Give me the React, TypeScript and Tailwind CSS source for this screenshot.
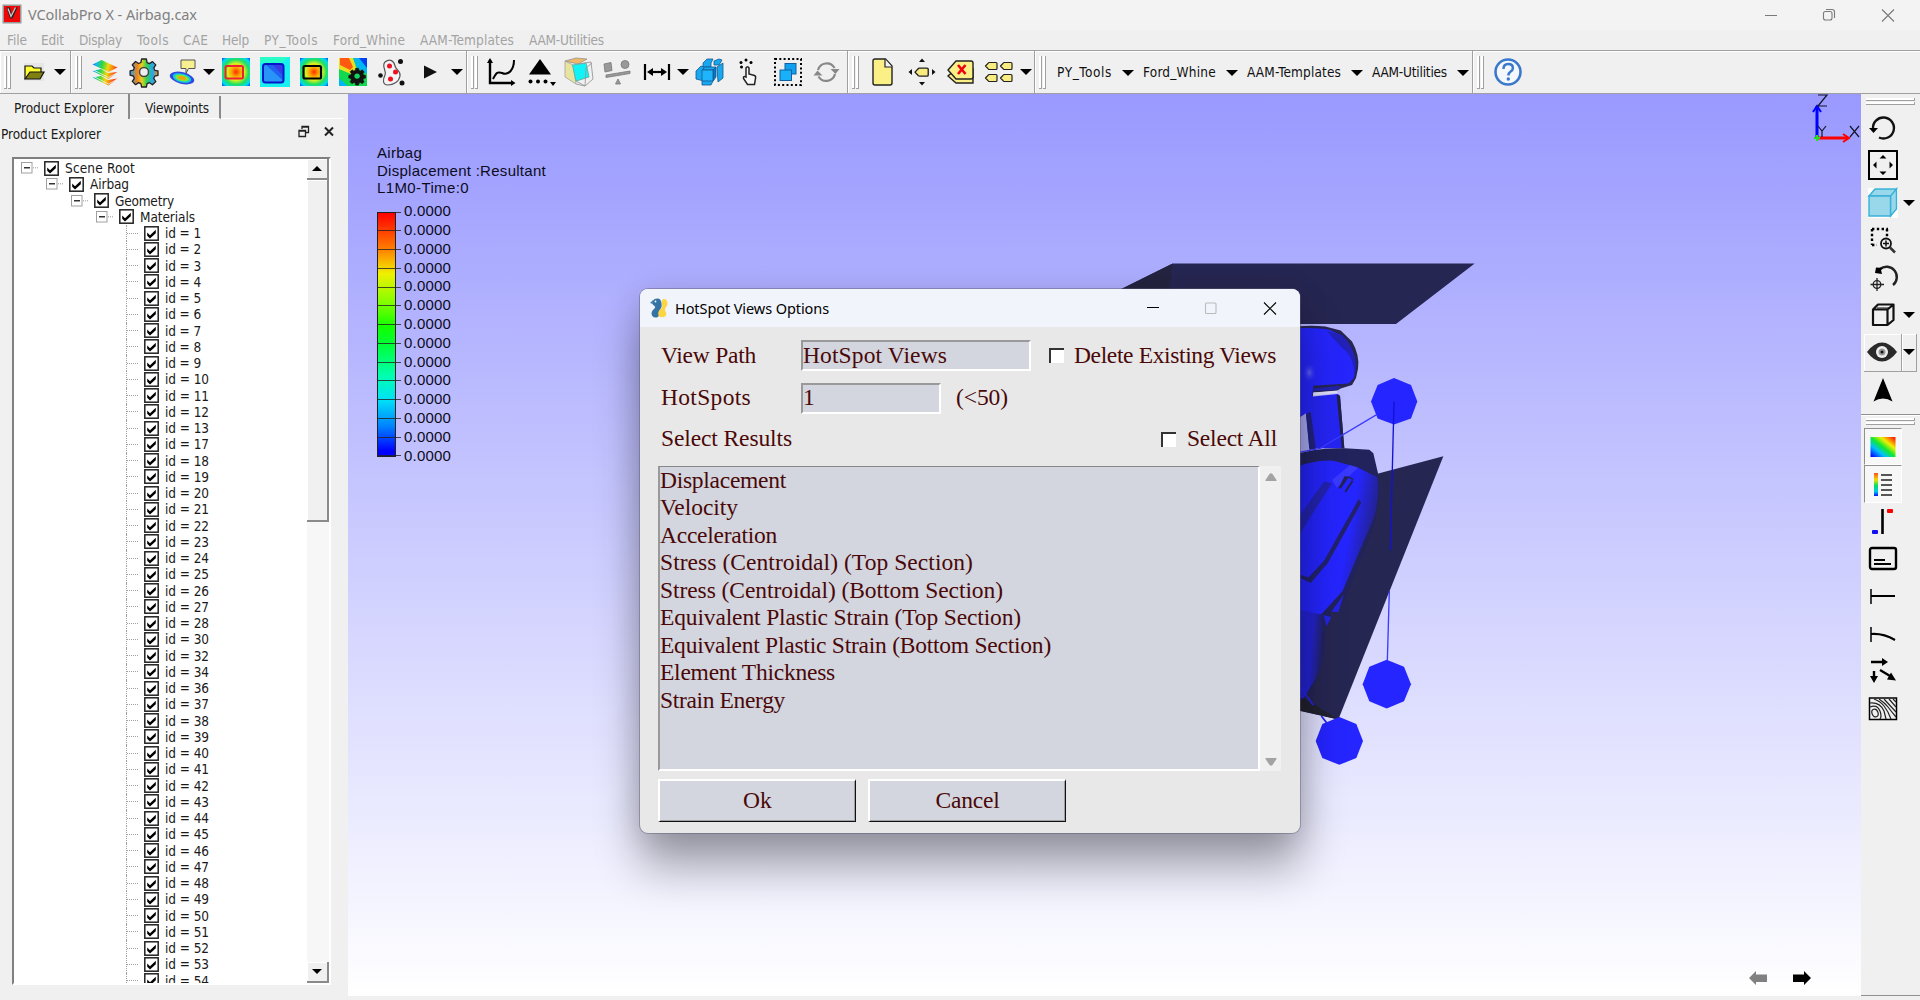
import { useLayoutEffect, useRef, type ReactNode } from "react";

const UI = "font-['DejaVu_Sans_Condensed','DejaVu_Sans','Noto_Sans',sans-serif]";

/* Text whose tracking is adjusted so that it fills a given width. */
function Fit({ w, className = "", children }: { w: number; className?: string; children: string }) {
  const ref = useRef<HTMLSpanElement>(null);
  useLayoutEffect(() => {
    const el = ref.current;
    if (!el) return;
    el.style.letterSpacing = "0px";
    const natural = el.getBoundingClientRect().width;
    el.style.letterSpacing = `${(w - natural) / children.length}px`;
  }, [w, children]);
  return (
    <span ref={ref} className={`inline-block shrink-0 whitespace-pre ${className}`}>
      {children}
    </span>
  );
}

function Ic({ children, className = "" }: { children: ReactNode; className?: string }) {
  return (
    <svg viewBox="0 0 32 32" className={`h-8 w-8 shrink-0 ${className}`} fill="none">
      {children}
    </svg>
  );
}

function Btn({ children }: { children: ReactNode }) {
  return <div className="flex h-full w-[39px] shrink-0 items-center justify-center">{children}</div>;
}

function Arrow() {
  return (
    <div className="flex h-full w-[14px] shrink-0 items-center justify-center">
      <svg viewBox="0 0 12 6" className="h-[6px] w-[12px]">
        <path d="M0 0H12L6 6Z" fill="#000" />
      </svg>
    </div>
  );
}

function Grip() {
  return (
    <div className="flex h-[33px] w-[8px] shrink-0 gap-[1px]">
      <div className="w-[3px] border-r border-b border-[#a0a0a0] bg-white" />
      <div className="w-[3px] border-r border-b border-[#a0a0a0] bg-white" />
    </div>
  );
}

function HGrip() {
  return (
    <div className="flex h-[7px] w-[49px] shrink-0 flex-col gap-[1px]">
      <div className="h-[3px] border-r border-b border-[#a0a0a0] bg-white" />
      <div className="h-[3px] border-r border-b border-[#a0a0a0] bg-white" />
    </div>
  );
}

function Bar({ width, children }: { width: string; children: ReactNode }) {
  return (
    <div className={`flex h-full shrink-0 items-center border-r border-[#a0a0a0] pl-[4px] shadow-[inset_1px_1px_0_#fff] ${width}`}>
      <Grip />
      {children}
    </div>
  );
}

const gearPath =
  "M13.6 3h4.8l.7 3.6 2.3 1 3.1-2 3.3 3.3-2 3 1 2.400 3.2.6v4.400l-3.300.8-1 2.300 2.100 3.100-3.300 3.300-3.100-2.100-2.300 1-.7 3.300h-4.800l-.7-3.400-2.300-1-3 2.100-3.300-3.300 2-3.100-1-2.300-3.200-.8v-4.400l3.300-.7 1-2.300-2.100-3 3.300-3.300 3 2 2.300-1z";

const menus: [string, number][] = [
  ["File", 34],
  ["Edit", 38],
  ["Display", 58],
  ["Tools", 46],
  ["CAE", 39],
  ["Help", 42],
  ["PY_Tools", 69],
  ["Ford_Whine", 87],
  ["AAM-Templates", 109],
  ["AAM-Utilities", 90],
];
const menuText = [20, 23, 43, 32, 25, 27, 54, 72, 94, 75];

function TitleBar() {
  return (
    <header className="flex h-[30px] items-center bg-[#f3f3f3] text-[#808080]">
      <svg viewBox="0 0 20 20" className="ml-[2px] mt-[-2px] h-5 w-5">
        <rect x=".5" y=".5" width="19" height="19" fill="#999" />
        <rect x="2" y="2" width="16" height="16" fill="#f00808" />
        <path d="M4.500 3.500h3.500l1.500 7 3.500-7h2.500l-5 11h-2.500z" fill="#222" />
        <path d="M6 4.500l3 8 4.500-9" stroke="#ccc" strokeWidth="1.300" fill="none" />
      </svg>
      <Fit w={169} className="ml-[6px] mt-[-1px] font-['Noto_Sans',sans-serif] text-[14.500px]">VCollabPro X - Airbag.cax</Fit>
      <div className="flex-1" />
      <svg viewBox="0 0 160 20" className="mr-[14px] mt-[-1px] h-5 w-40" fill="none" stroke="#7a7a7a" strokeWidth="1.100">
        <path d="M19 10.500h12M136 4.500l12 12M148 4.500l-12 12" />
        <rect x="77.500" y="6.500" width="8.500" height="8.500" rx="2" />
        <path d="M80 4.500h6a2.500 2.500 0 0 1 2.500 2.500v6" />
      </svg>
    </header>
  );
}

function MenuBar() {
  return (
    <nav className={`flex h-[20px] items-center bg-[#f0f0f0] pt-[1px] pl-[7px] text-[13.500px] text-[#a3a3a3] ${UI}`}>
      {menus.map(([m, w], i) => (
        <div key={m} className="shrink-0" style={{ width: w }}>
          <Fit w={menuText[i]}>{m}</Fit>
        </div>
      ))}
    </nav>
  );
}

function Tag({ x, y, s = 1 }: { x: number; y: number; s?: number }) {
  return (
    <path transform={`translate(${x} ${y}) scale(${s})`} d="M0 4L3 .8Q3.400 .5 4 .5H10.500Q11.500 .5 11.500 1.500V6.500Q11.500 7.500 10.500 7.500H4Q3.400 7.500 3 7.200Z" fill="#f8ec80" stroke="#222" strokeWidth="1.200" strokeLinejoin="round" />
  );
}

function ToolBars() {
  return (
    <div className="flex h-[44px] border-t-[1.500px] border-b border-[#a0a0a0] bg-[#f0f0f0]">
      <svg className="absolute h-0 w-0">
        <defs>
          <radialGradient id="hot" cx=".5" cy=".5" r=".72">
            <stop offset="0" stopColor="#ff2a00" />
            <stop offset=".22" stopColor="#ffa000" />
            <stop offset=".42" stopColor="#d8f020" />
            <stop offset=".62" stopColor="#20e060" />
            <stop offset=".82" stopColor="#00d8f0" />
            <stop offset="1" stopColor="#0030f0" />
          </radialGradient>
          <linearGradient id="rain" x1="0" y1="1" x2="1" y2="0">
            <stop offset=".05" stopColor="#0010ff" />
            <stop offset=".3" stopColor="#00c0ff" />
            <stop offset=".5" stopColor="#10e830" />
            <stop offset=".7" stopColor="#f0f000" />
            <stop offset=".95" stopColor="#ff2000" />
          </linearGradient>
          <linearGradient id="sheet" gradientUnits="userSpaceOnUse" x1="3" y1="0" x2="29" y2="6">
            <stop offset="0" stopColor="#2030ff" />
            <stop offset=".22" stopColor="#10b8f0" />
            <stop offset=".45" stopColor="#30d840" />
            <stop offset=".68" stopColor="#f0d810" />
            <stop offset="1" stopColor="#ff4010" />
          </linearGradient>
          <linearGradient id="rainh" x1="0" y1="0" x2="1" y2="0">
            <stop offset="0" stopColor="#20a8f0" />
            <stop offset=".25" stopColor="#f08020" />
            <stop offset=".42" stopColor="#e8d020" />
            <stop offset=".6" stopColor="#30d050" />
            <stop offset=".8" stopColor="#20a8f0" />
            <stop offset="1" stopColor="#f09020" />
          </linearGradient>
          <linearGradient id="rainv" x1="0" y1="0" x2="0" y2="1">
            <stop offset="0" stopColor="#ff5020" />
            <stop offset=".3" stopColor="#f0e000" />
            <stop offset=".55" stopColor="#00e060" />
            <stop offset=".8" stopColor="#00c8f0" />
            <stop offset="1" stopColor="#0010ff" />
          </linearGradient>
        </defs>
      </svg>
      <Bar width="w-[71px]">
        <div className="w-[2px]" />
        <Btn>
          <Ic>
            <path d="M6 7h20v18H6z" fill="#e6e6e6" />
            <path d="M7 23V10h7l2 2h7v4" fill="#ffff30" stroke="#111" strokeWidth="1.200" />
            <path d="M7 23l5-7h14l-4 7z" fill="#808010" stroke="#111" strokeWidth="1.200" />
          </Ic>
        </Btn>
        <Arrow />
      </Bar>
      <Bar width="w-[396px]">
        <div className="w-[2px]" />
        <Btn>
          <Ic>
            <path d="M3.500 21.500L12 20l7 4 9.500-1.500-9 7z" fill="url(#sheet)" />
            <path d="M3.500 15L12 13l7 4 9.500-1-9 7z" fill="url(#sheet)" />
            <path d="M3.500 8.500L12.500 4 28.500 11.500 19.500 16z" fill="url(#sheet)" />
            <path d="M3.500 13.500l16 8 9-5M3.500 20l16 8 9-5" stroke="#f0f0f0" strokeWidth=".8" />
          </Ic>
        </Btn>
        <Btn>
          <Ic>
            <path d={gearPath} fill="url(#rainh)" stroke="#222" strokeWidth="1.300" strokeLinejoin="round" />
            <circle cx="16" cy="16" r="4.500" fill="#eee" stroke="#444" strokeWidth="1.500" />
          </Ic>
        </Btn>
        <Btn>
          <Ic>
            <path d="M14 4h14v8.500h-6.500l-2.500 5v-5h-5z" fill="#f8f090" stroke="#555" />
            <g transform="rotate(14 15 22)">
              <ellipse cx="15" cy="22" rx="12.500" ry="5.800" fill="#3048e0" />
              <ellipse cx="15" cy="22" rx="9.500" ry="4.400" fill="#10c8e0" />
              <ellipse cx="15" cy="22" rx="7" ry="3.100" fill="#80e830" />
              <ellipse cx="15" cy="22" rx="4" ry="1.800" fill="#f0a010" />
            </g>
          </Ic>
        </Btn>
        <Arrow />
        <Btn>
          <Ic>
            <rect x="2" y="2" width="28" height="28" fill="url(#hot)" />
            <rect x="5.500" y="10" width="17.500" height="12.500" rx="1.500" stroke="#f02030" strokeWidth="2" />
          </Ic>
        </Btn>
        <Btn>
          <Ic>
            <rect x="1" y="1" width="30" height="30" fill="#18f0f0" />
            <path d="M1 1h29L22 7H1z" fill="#28ffc8" />
            <rect x="4" y="8" width="20.500" height="18.500" rx="2.500" fill="#2894f8" />
            <path d="M6 8h17q1.500 0 1.500 2v15z" fill="#2060f0" />
            <path d="M14 9h9.500v10z" fill="#3838e8" />
            <rect x="4" y="8" width="20.500" height="18.500" rx="2.500" stroke="#0018c8" strokeWidth="2" />
          </Ic>
        </Btn>
        <Btn>
          <Ic>
            <rect x="2" y="2" width="28" height="28" fill="url(#hot)" />
            <rect x="5.500" y="10" width="17.500" height="12.500" rx="1.500" stroke="#000" strokeWidth="2.200" />
          </Ic>
        </Btn>
        <Btn>
          <Ic>
            <rect x="2" y="2" width="28" height="28" fill="#10d850" />
            <path d="M16 2h14v16L20 12z" fill="#00b8f0" />
            <path d="M22 2h8v10z" fill="#0040f0" />
            <path d="M2 2h14l4 12-6 4-12-5z" fill="#e8e020" />
            <path d="M3 2h9l4 9-3 3L3 9z" fill="#ff5810" />
            <path d="M2 22l9 8H2z" fill="#00b8f0" />
            <g transform="translate(10.500 10.500) scale(.6)">
              <path d={gearPath} fill="#111" stroke="#111" />
              <circle cx="16" cy="16" r="4.500" fill="#10d860" />
            </g>
          </Ic>
        </Btn>
        <Btn>
          <Ic className="-ml-[2px]">
            <path d="M10 6c5-4 9-1 10 4 1 4 6 5 5 10-1 6-7 9-12 9-6 0-5-6-3-10s-4-9 0-13z" fill="#f4f4f4" stroke="#555" strokeWidth="1.200" />
            <g fill="#f01020">
              <circle cx="14.500" cy="10" r="2.500" />
              <circle cx="20.500" cy="16" r="2.500" />
              <circle cx="15.500" cy="23" r="2.500" />
            </g>
            <g fill="#111">
              <circle cx="25.500" cy="5.500" r="2.500" />
              <circle cx="5.500" cy="19.500" r="2.300" />
              <circle cx="27" cy="27" r="2.500" />
            </g>
          </Ic>
        </Btn>
        <Btn>
          <Ic>
            <path d="M9 9.500v13L22 16z" fill="#111" />
          </Ic>
        </Btn>
        <Arrow />
      </Bar>
      <Bar width="w-[381px]">
        <div className="w-[2px]" />
        <Btn>
          <Ic>
            <path d="M5 4v23h23" stroke="#000" strokeWidth="2.400" />
            <path d="M2 7l3-5 3 5zM26 24l4.500 3-4.500 3z" fill="#000" />
            <path d="M8 23c4-8 5-7 9-6 7 3 12-4 12-13" stroke="#000" strokeWidth="2" />
          </Ic>
        </Btn>
        <Btn>
          <Ic>
            <path d="M16 3L27 18.500H5z" fill="#000" />
            <g fill="#000">
              <circle cx="6.500" cy="25.500" r="2" />
              <circle cx="14" cy="25.500" r="2" />
              <circle cx="21.500" cy="25.500" r="2" />
              <path d="M26 26h6l-3 4z" />
            </g>
          </Ic>
        </Btn>
        <Btn>
          <Ic>
            <path d="M2 5l11-3 11 1-9 5z" fill="#f0b868" stroke="#888" strokeWidth=".7" />
            <path d="M2 5l8 4 3 19-11-7z" fill="#e8e4a0" stroke="#999" strokeWidth=".7" />
            <path d="M9.500 9L23 7l3 14-13 4z" fill="#10f4f8" stroke="#58b8a8" />
            <path d="M15 8l13-2 2 17-8 7-9-2M22 30l1-18M23 12l6-5M13 25l9 5" stroke="#999" strokeWidth=".9" />
          </Ic>
        </Btn>
        <Btn>
          <Ic>
            <g fill="#999" stroke="#777" strokeWidth=".8">
              <path d="M2 8l7-1.500 1 8-7 1.500z" />
              <circle cx="23" cy="8.500" r="4" />
              <path d="M4 19l24-4v2.500L4 21.500z" />
              <path d="M16 23l2.500 5h-5z" />
            </g>
          </Ic>
        </Btn>
        <Btn>
          <Ic>
            <path d="M4 8v16M28 8v16" stroke="#000" strokeWidth="2.200" />
            <path d="M8 16h16" stroke="#000" strokeWidth="2.200" />
            <path d="M6 16l6-4v8zM26 16l-6-4v8z" fill="#000" />
          </Ic>
        </Btn>
        <Arrow />
        <Btn>
          <Ic>
            <g fill="#18a8f0" stroke="#105890" strokeWidth=".8" strokeLinejoin="round">
              <path d="M9 7l4-4h6l-2 4v4H9zM20 5l5-2 3 1-3 5h-5z" />
              <path d="M2 15l5-5 3 1v14l-8-2zM23 11l6-4v15l-5 4z" />
              <path d="M8 25l3-2h9l-3 6H8z" />
              <path d="M8 14l3-3h11l-3 3z" />
              <path d="M19 14l3-3v10l-3 4z" fill="#0878c0" />
              <path d="M8 14h11v11H8z" fill="#20b4fc" />
            </g>
          </Ic>
        </Btn>
        <Btn>
          <Ic>
            <g fill="#000">
              <circle cx="13" cy="4" r="1.500" />
              <circle cx="8" cy="6.500" r="1.500" />
              <circle cx="18" cy="6.500" r="1.500" />
              <circle cx="8.500" cy="11" r="1.500" />
            </g>
            <path d="M13 21v-9q1.500-2.500 3 0v6l5.500 1.500q1.500.5 1 3l-1 6h-7l-4-6q-.5-3 2.500-1.500z" fill="#f8f8f8" stroke="#222" strokeWidth="1.500" />
          </Ic>
        </Btn>
        <Btn>
          <Ic>
            <rect x="3" y="3" width="26" height="26" stroke="#000" strokeWidth="2" strokeDasharray="2 2.300" />
            <rect x="13" y="7.500" width="11" height="10.500" fill="#10a0f0" stroke="#1060a0" />
            <rect x="8" y="14" width="11.500" height="10.500" fill="#18b0f8" stroke="#1060a0" />
          </Ic>
        </Btn>
        <Btn>
          <Ic>
            <path d="M7 14a9 9 0 0 1 16.500-2M24 18a9 9 0 0 1-16.500 2.500" stroke="#888" strokeWidth="2.200" />
            <path d="M19.500 13h9l-4 5zM2.500 19.500h9l-5-5z" fill="#888" />
          </Ic>
        </Btn>
      </Bar>
      <Bar width="w-[187px]">
        <div className="w-[3px]" />
        <Btn>
          <Ic>
            <path d="M6 5q0-2 2-2h10.500l6.500 7v17q0 2-2 2H8q-2 0-2-2z" fill="#faf086" stroke="#222" strokeWidth="1.400" />
            <path d="M18 3v8h7" fill="#f4f4f4" stroke="#222" strokeWidth="1.200" />
          </Ic>
        </Btn>
        <Btn>
          <Ic>
            <Tag x={9} y={11.500} s={1.150} />
            <path d="M13 6l3-3.500L19 6zM13 26l3 3.500 3-3.500zM6 13l-3.500 3L6 19zM26 13l3.500 3-3.500 3z" fill="#111" />
          </Ic>
        </Btn>
        <Btn>
          <Ic>
            <path d="M3 20l8 7h17V13H11z" fill="#faf086" stroke="#222" strokeWidth="1.400" />
            <path d="M3 14L11 5h15q2 0 2 2v14q0 2-2 2H11z" fill="#faf086" stroke="#222" strokeWidth="1.400" strokeLinejoin="round" />
            <path d="M13 9l7.500 9M20.500 9L13 18" stroke="#f00010" strokeWidth="2.600" />
          </Ic>
        </Btn>
        <Btn>
          <Ic>
            <Tag x={1.500} y={6} />
            <Tag x={16.500} y={6} />
            <Tag x={1.500} y={18} />
            <Tag x={16.500} y={18} />
          </Ic>
        </Btn>
        <Arrow />
      </Bar>
      <Bar width="w-[438px]">
        <div className={`flex items-center pt-[1px] pl-[10px] text-[13.500px] text-[#111] ${UI}`}>
          <Fit w={55}>PY_Tools</Fit>
          <div className="w-[9px]" />
          <Arrow />
          <div className="w-[8px]" />
          <Fit w={73}>Ford_Whine</Fit>
          <div className="w-[9px]" />
          <Arrow />
          <div className="w-[8px]" />
          <Fit w={94}>AAM-Templates</Fit>
          <div className="w-[9px]" />
          <Arrow />
          <div className="w-[8px]" />
          <Fit w={75}>AAM-Utilities</Fit>
          <div className="w-[9px]" />
          <Arrow />
        </div>
      </Bar>
      <div className="flex h-full flex-1 items-center pl-[4px] shadow-[inset_1px_1px_0_#fff]">
        <Grip />
        <div className="w-[3px]" />
        <Btn>
          <Ic>
            <circle cx="16" cy="16" r="12.500" fill="#f4f8fd" stroke="#3a78cc" strokeWidth="2.600" />
            <path d="M11.500 13q0-5 4.700-5t4.700 4q0 2.200-2.500 3.700-2 1.300-2 3.800" stroke="#3a78cc" strokeWidth="2.500" />
            <circle cx="16.300" cy="23" r="1.700" fill="#3a78cc" />
          </Ic>
        </Btn>
      </div>
    </div>
  );
}

const ids = [
  1, 2, 3, 4, 5, 6, 7, 8, 9, 10, 11, 12, 13, 17, 18, 19, 20, 21, 22, 23, 24, 25, 26, 27, 28, 30, 32, 34, 36, 37, 38, 39,
  40, 41, 42, 43, 44, 45, 46, 47, 48, 49, 50, 51, 52, 53, 54,
];

function Check() {
  return (
    <svg viewBox="0 0 15 15" className="h-[15px] w-[15px] shrink-0">
      <rect x=".8" y=".8" width="13.400" height="13.400" fill="#fff" stroke="#222" strokeWidth="1.500" />
      <path d="M3.200 6.500L6 9.300 11.800 3.800v3.400L6 12.500 3.200 9.800z" fill="#000" />
    </svg>
  );
}

function Expander() {
  return (
    <svg viewBox="0 0 20 12" className="h-3 w-5 shrink-0" fill="none">
      <rect x=".5" y=".5" width="10.500" height="10.500" fill="#fff" stroke="#a0a0a0" />
      <path d="M3 5.800h6" stroke="#000" strokeWidth="1.200" />
      <path d="M12 5.800h6" stroke="#999" strokeDasharray="1 1" />
    </svg>
  );
}

const heads: [string, string, number][] = [
  ["Scene Root", "pl-[7px]", 70],
  ["Airbag", "pl-[32px]", 39],
  ["Geometry", "pl-[57px]", 59],
  ["Materials", "pl-[82px]", 55],
];

function ScrollButton({ up = false }: { up?: boolean }) {
  return (
    <div className="flex h-[21px] w-full shrink-0 items-center justify-center border-r-2 border-b-2 border-[#8a8a8a] bg-[#f0f0f0] shadow-[inset_1px_1px_0_#fff]">
      <svg viewBox="0 0 10 5" className="h-[5px] w-[10px]">
        <path d={up ? "M0 5L5 0l5 5z" : "M0 0h10L5 5z"} />
      </svg>
    </div>
  );
}

function Explorer() {
  return (
    <aside className={`flex w-[348px] shrink-0 flex-col bg-[#f0f0f0] text-[13.500px] text-[#1a1a1a] ${UI}`}>
      <div className="flex h-[25px] w-[343px] items-end">
        <div className="flex h-[25px] w-[130px] items-center border-r-2 border-[#8a8a8a] pt-[3px] pl-[14px]">
          <Fit w={100}>Product Explorer</Fit>
        </div>
        <div className="flex h-[23px] w-[91px] items-center border-r-2 border-b border-r-[#8a8a8a] border-b-white pt-[3px] pl-[15px]">
          <Fit w={64}>Viewpoints</Fit>
        </div>
        <div className="h-[1px] flex-1 bg-white" />
      </div>
      <div className="flex h-[30px] items-center pt-[1px] pl-[1px]">
        <Fit w={100}>Product Explorer</Fit>
        <svg viewBox="0 0 40 14" className="ml-[196px] mt-[-6px] h-[14px] w-[40px]" fill="none" stroke="#222">
          <path d="M5 4V1.500h6.500v6H9M5 2h6.500" strokeWidth="1.300" />
          <path d="M2 5.500h6.500v6H2zM2 6.200h6.500" strokeWidth="1.300" />
          <path d="M28 2.500l8 8M36 2.500l-8 8" strokeWidth="2" />
        </svg>
      </div>
      <div className="mt-[8px] ml-[12px] flex h-[828px] w-[319px] overflow-hidden border-t-2 border-r-2 border-b-2 border-l-2 border-t-[#808080] border-r-white border-b-white border-l-[#808080] bg-white">
        <div className="flex flex-1 flex-col pt-[1px]">
          {heads.map(([name, pad, w]) => (
            <div key={name} className={`flex h-[16.250px] shrink-0 items-center ${pad}`}>
              <Expander />
              <div className="w-[3px]" />
              <Check />
              <Fit w={w} className="ml-[6px]">{name}</Fit>
            </div>
          ))}
          {ids.map((id) => (
            <div key={id} className="flex h-[16.250px] shrink-0 items-center pl-[112px]">
              <div className="flex h-full w-[12px] items-center border-l border-dotted border-[#a0a0a0]">
                <div className="w-[11px] border-t border-dotted border-[#a0a0a0]" />
              </div>
              <div className="w-[6px]" />
              <Check />
              <Fit w={id < 10 ? 36 : 44} className="ml-[6px]">{`id = ${id}`}</Fit>
            </div>
          ))}
        </div>
        <div className="flex w-[22px] shrink-0 flex-col bg-[#f7f7f7]">
          <ScrollButton up />
          <div className="h-[342px] border-r-2 border-b-2 border-[#8a8a8a] bg-[#f0f0f0] shadow-[inset_1px_1px_0_#fff]" />
          <div className="flex-1" />
          <ScrollButton />
        </div>
      </div>
    </aside>
  );
}

function Model() {
  return (
    <svg viewBox="0 0 1200 1568" preserveAspectRatio="none" className="absolute top-[156px] left-[752px] h-[540px] w-[400px]" fill="none">
      <defs>
        <linearGradient id="torso" x1="0" y1="0" x2="1" y2=".3">
          <stop offset="0" stopColor="#2323f4" />
          <stop offset=".75" stopColor="#2525ff" />
          <stop offset="1" stopColor="#22228a" />
        </linearGradient>
        <linearGradient id="thigh" x1="0" y1="0" x2="1" y2=".15">
          <stop offset="0" stopColor="#2020e0" />
          <stop offset=".7" stopColor="#2323d0" />
          <stop offset="1" stopColor="#22225c" />
        </linearGradient>
        <radialGradient id="shine">
          <stop offset="0" stopColor="#6464ff" />
          <stop offset="1" stopColor="#2525ff" stopOpacity="0" />
        </radialGradient>
      </defs>
      <path d="M64 113L218 39H1124L888 215H560V113z" fill="#262652" />
      <path d="M64 113L218 39L208 113z" fill="#242440" />
      <path d="M560 226Q620 216 676 222L722 234L756 266Q780 306 774 345L768 372L756 392L722 402L708 410L640 414L632 470L600 486L560 480z" fill="#262650" />
      <path d="M560 230Q640 222 690 232L728 250Q758 280 768 330L762 372L745 388L640 394L632 470L600 486L560 480z" fill="#2525fc" />
      <path d="M680 236L725 246Q762 280 769 330L765 360Q755 300 728 286z" fill="#2222b8" />
      <ellipse cx="628" cy="356" rx="22" ry="30" fill="url(#shine)" />
      <path d="M640 402l82-8-10 12-72 4z" fill="#2222b0" />
      <path d="M640 414l72-6v7l-72 8z" fill="#ddddf8" />
      <path d="M600 486l18-12 10 110-28 4z" fill="#a9a9f4" />
      <path d="M632 426l82-8 6 6 13 152H628L618 474l14-4z" fill="#2525f4" />
      <path d="M710 420l10 3 13 153h-8z" fill="#222244" />
      <path d="M618 476l14-6 16 110h-20z" fill="#232380" />
      <path d="M832 650L1030 599L715 1363L560 1330V1290z" fill="#262652" />
      <path d="M590 1335V1300L610 1300L715 1363z" fill="#222230" />
      <path d="M560 600Q650 572 735 576L808 580L820 590L834 648L838 700Q836 780 790 880Q750 980 715 1052L694 1050L682 1092L670 1060Q680 1180 640 1270L610 1306H560z" fill="#22225c" />
      <path d="M560 640Q640 608 700 612L770 630L832 660Q840 700 825 770L776 880L728 990L660 1062L600 1048H560z" fill="url(#torso)" />
      <path d="M600 587L660 576L830 478" stroke="#3b3bff" strokeWidth="3.500" />
      <path d="M696 668L750 624L774 632L710 690z" fill="#4848ff" opacity=".6" />
      <path d="M672 672L696 678Q640 760 600 824V770z" fill="#2323ae" />
      <path d="M734 656l12 4-24 34-6-4zM756 668l4 4-22 32-4-4z" fill="#222256" />
      <path d="M742 658l18 8" stroke="#222256" strokeWidth="4" />
      <path d="M776 724L784 734L684 908L632 967L600 952V944L626 950L672 902z" fill="#22226c" />
      <path d="M694 1050l38-50-17 52zM670 1060l24 6-14 27z" fill="#2424e0" />
      <path d="M560 1036L670 1060Q682 1180 650 1240L612 1300L560 1310z" fill="url(#thigh)" />
      <path d="M600 1268L640 1322M664 1353l16 20" stroke="#2424e8" strokeWidth="5" />
      <g fill="#2525ff">
        <path d="M882 372l51 20 19 48-19 49-51 18-49-18-20-49 20-48z" />
        <path d="M860 1190l52 20 21 51-21 49-52 21-52-21-20-49 20-51z" />
        <path d="M718 1356l51 20 20 50-20 49-51 20-51-20-20-49 20-50z" />
      </g>
      <path d="M882 440L871 872" stroke="#1212d4" strokeWidth="4" />
      <path d="M868 990L862 1192" stroke="#3b3bff" strokeWidth="4" />
    </svg>
  );
}

function Legend() {
  return (
    <div className="absolute top-[50px] left-[29px] font-['Liberation_Sans',Arial,sans-serif] text-[15px] leading-[17.500px] text-[#0c0c20]">
      <div><Fit w={45}>Airbag</Fit></div>
      <div><Fit w={169}>Displacement :Resultant</Fit></div>
      <div><Fit w={92}>L1M0-Time:0</Fit></div>
      <div className="mt-[5px] flex">
        <div className="mt-[10px] h-[245px] w-[19px] border border-[#222] bg-[linear-gradient(to_bottom,#ff0000,#ff8000_15%,#f0f000_25%,#80ff00_37%,#10ff00_47%,#00ff40_55%,#00ffb0_67%,#00e0f8_77%,#0080ff_88%,#0000ff_98%)]">
          <div className="-mt-[1px] flex h-[263px] w-[23px] flex-col">
            {Array.from({ length: 14 }, (_, i) => (
              <div key={i} className="h-[18.750px] shrink-0 border-t-[1.500px] border-[#222]/80" />
            ))}
          </div>
        </div>
        <div className="ml-[8px]">
          {Array.from({ length: 14 }, (_, i) => (
            <div key={i} className="flex h-[18.800px] items-center"><Fit w={47}>0.0000</Fit></div>
          ))}
        </div>
      </div>
    </div>
  );
}

function TkCheck() {
  return <div className="h-[15px] w-[15px] shrink-0 border-t-2 border-l-2 border-t-[#333] border-l-[#333] bg-white" />;
}

const results: [string, number][] = [
  ["Displacement", 126],
  ["Velocity", 78],
  ["Acceleration", 117],
  ["Stress (Centroidal) (Top Section)", 313],
  ["Stress (Centroidal) (Bottom Section)", 343],
  ["Equivalent Plastic Strain (Top Section)", 361],
  ["Equivalent Plastic Strain (Bottom Section)", 391],
  ["Element Thickness", 175],
  ["Strain Energy", 125],
];

function Dialog() {
  return (
    <div className="absolute top-[195px] left-[292px] flex h-[544px] w-[660px] flex-col overflow-visible rounded-[8px] bg-[#e8e8e8] font-['Liberation_Serif','Times_New_Roman',serif] text-[23.500px] leading-[26px] text-[#4a0808] shadow-[0_0_0_1px_rgba(90,90,120,0.45),0_34px_46px_rgba(0,0,0,0.33),0_4px_30px_rgba(0,0,0,0.14)]">
      <div className="flex h-[38px] shrink-0 items-center rounded-t-[8px] bg-[#f1f4fa] pl-[9px] text-black">
        <svg viewBox="0 0 20 20" className="h-5 w-5">
          <path d="M8.500 .5C6 .5 4 1.500 3.500 4c-.3 2 .5 3 2 4 1 .8.800 1.500 0 2.500-1.500 1.500-3 2.500-3 5 0 2 1.500 4 4 4 3 0 4-2 3.500-4.500-.3-1.500.5-2.500 1.500-4S13 8 12.500 5C12 2 11 .5 8.500 .5z" fill="#3673a5" />
          <path d="M14.500 .8c2.500.2 4 2 4 4.200 0 2-1 3.500-2 5s-.5 3 .5 4.500c1 1.800 0 4.500-3.500 4.700-3 .2-4.500-1.500-4.300-4 .2-2 1.500-3.200 2.800-4.700s1.500-2.500 1-4.500c-.5-2.500 0-4 1.500-5.200z" fill="#fdd541" />
          <path d="M1 5l3-3v4z" fill="#4183b8" />
          <circle cx="6.500" cy="3.500" r=".9" fill="#fff" />
        </svg>
        <Fit w={154} className="ml-[6px] -mt-[1px] font-['Noto_Sans',sans-serif] text-[14.500px]">HotSpot Views Options</Fit>
        <div className="flex-1" />
        <svg viewBox="0 0 150 20" className="mr-[11px] h-5 w-[150px]" fill="none" stroke="#000" strokeWidth="1.100">
          <path d="M8 9.500h12M125 4.500l12 12M137 4.500l-12 12" />
          <rect x="66.500" y="5" width="10.500" height="10.500" rx="1" stroke="#bbb" />
        </svg>
      </div>
      <div className="flex h-[57px] shrink-0 items-center pl-[21px]">
        <Fit w={95} className="-mt-[2px]">View Path</Fit>
        <div className="ml-[45px] flex h-[31px] w-[230px] items-center border-2 border-t-[#999] border-r-white border-b-white border-l-[#999] bg-[#d3d6df]">
          <Fit w={144} className="-mt-[2px]">HotSpot Views</Fit>
        </div>
        <div className="w-[18px]" />
        <TkCheck />
        <Fit w={202} className="-mt-[2px] ml-[10px]">Delete Existing Views</Fit>
      </div>
      <div className="flex h-[28px] shrink-0 items-center pl-[21px]">
        <Fit w={90} className="-mt-[2px]">HotSpots</Fit>
        <div className="ml-[50px] flex h-[31px] w-[140px] items-center border-2 border-t-[#999] border-r-white border-b-white border-l-[#999] bg-[#d3d6df]">
          <Fit w={11} className="-mt-[2px]">1</Fit>
        </div>
        <Fit w={52} className="-mt-[2px] ml-[15px]">(&lt;50)</Fit>
      </div>
      <div className="flex h-[54px] shrink-0 items-center pl-[21px]">
        <Fit w={131} className="-mt-[2px]">Select Results</Fit>
        <div className="w-[369px]" />
        <TkCheck />
        <Fit w={90} className="-mt-[2px] ml-[11px]">Select All</Fit>
      </div>
      <div className="ml-[18px] flex h-[305px] shrink-0">
        <div className="w-[602px] border-t border-r-2 border-b-2 border-l-2 border-t-[#888] border-r-white border-b-white border-l-[#999] bg-[#d3d6df]">
          {results.map(([r, w]) => (
            <div key={r} className="flex h-[27.500px] items-center"><Fit w={w} className="-mt-[2px]">{r}</Fit></div>
          ))}
        </div>
        <div className="flex w-[21px] flex-col items-center justify-between bg-[#f0f0f0] pt-[7px] pb-[5px]">
          <svg viewBox="0 0 12 9" className="h-[9px] w-[12px]"><path d="M1 8q-1 0-.5-1L4.500 1q1.500-1.500 3 0l4 6q.5 1-.5 1z" fill="#a3a3a3" /></svg>
          <svg viewBox="0 0 12 9" className="h-[9px] w-[12px]"><path d="M1 1Q0 1 .5 2l4 6q1.500 1.500 3 0l4-6q.5-1-.5-1z" fill="#a3a3a3" /></svg>
        </div>
      </div>
      <div className="mt-[8px] ml-[18px] flex gap-[12px]">
        {["Ok", "Cancel"].map((b) => (
          <div key={b} className="flex h-[43px] w-[198px] items-center justify-center border-t-2 border-r border-b border-l-2 border-t-white border-r-[#111] border-b-[#111] border-l-white bg-[#d3d6df] shadow-[inset_-1px_-1px_0_#a0a0a0]">
            <Fit w={b === "Ok" ? 29 : 64} className="-mt-[2px]">{b}</Fit>
          </div>
        ))}
      </div>
    </div>
  );
}

function Viewport() {
  return (
    <main className="relative h-[902px] w-[1513px] shrink-0 overflow-hidden bg-[linear-gradient(to_bottom,#9999ff,#ffffff)]">
      <Legend />
      <Model />
      <svg viewBox="0 0 50 50" className="absolute top-0 right-0 h-[50px] w-[50px]" fill="none">
        <path d="M6 44V12" stroke="#0000ff" strokeWidth="3" />
        <path d="M2 18l4-6 4 6" stroke="#0000ff" strokeWidth="2" />
        <path d="M6 44h31" stroke="#ff0000" strokeWidth="3" />
        <path d="M32 40l6 4-6 4" stroke="#ff0000" strokeWidth="2" />
        <path d="M3 44h6M6 41v6" stroke="#20e020" strokeWidth="2" />
        <path d="M7 1h9L7 12h9M7 32l4 5 4-5M11 37v6M39 32l9 11M48 32l-9 11" stroke="#15152a" strokeWidth="1.200" />
      </svg>
      <svg viewBox="0 0 64 16" className="absolute right-[49px] bottom-[10px] h-4 w-16">
        <path d="M1 8l7-7v3.500h11v7.500H8V15z" fill="#808080" />
        <path d="M63 8l-7-7v3.500H45v7.500h11V15z" fill="#000" />
      </svg>
      <Dialog />
    </main>
  );
}

function SideItem({ children, arrow = false, className = "" }: { children: ReactNode; arrow?: boolean; className?: string }) {
  return (
    <div className={`flex h-[37.500px] shrink-0 items-center ${className}`}>
      <div className="flex w-[38px] justify-center">{children}</div>
      {arrow && <div className="flex w-[15px] justify-center"><Arrow /></div>}
    </div>
  );
}

function RightBar() {
  return (
    <aside className="flex h-[902px] w-[59px] shrink-0 flex-col border-b border-[#909090] bg-[#f0f0f0] pl-[2.500px]">
      <div className="pt-[4px] pl-[2px]"><HGrip /></div>
      <div className="h-[4px] shrink-0" />
      <SideItem>
        <Ic>
          <path d="M6 17A10.500 10.500 0 1 1 12 25.500" stroke="#111" strokeWidth="2.400" />
          <path d="M2 16h9l-4.500 5z" fill="#000" />
        </Ic>
      </SideItem>
      <SideItem>
        <Ic>
          <rect x="2" y="2" width="28" height="28" stroke="#000" strokeWidth="2" />
          <path d="M12.500 9.500l3.500-3.500 3.500 3.500zM12.500 22.500l3.500 3.500 3.500-3.500zM9.500 12.500L6 16l3.500 3.500zM22.500 12.500L26 16l-3.500 3.500z" fill="#000" />
        </Ic>
      </SideItem>
      <SideItem arrow>
        <Ic>
          <path d="M1 1h30v30H1z" fill="#fff" />
          <g fill="#98d8ea" stroke="#38b0d8" strokeWidth="1.400">
            <path d="M2 9l6-7h21.500l-6 7zM23.500 9l6-7v20l-6 7z" />
            <path d="M2 9h21.500v20H2z" />
          </g>
        </Ic>
      </SideItem>
      <SideItem>
        <Ic>
          <path d="M5 5h16M5 5v16M5 21h5M20 5v9" stroke="#000" strokeWidth="2.400" strokeDasharray="2.400 2.400" />
          <circle cx="19" cy="19.500" r="5" stroke="#111" strokeWidth="1.800" />
          <path d="M16 19.500h6M19 16.500v6" stroke="#111" strokeWidth="1.500" />
          <path d="M23 23.500l5 5" stroke="#333" strokeWidth="2.500" />
        </Ic>
      </SideItem>
      <SideItem>
        <Ic>
          <path d="M13 7a9.500 9.500 0 0 1 13 16" stroke="#222" strokeWidth="2.400" />
          <path d="M9 5.500l7 .5-2 2 1 4-7-1z" fill="#000" />
          <circle cx="10" cy="22.500" r="3.800" stroke="#222" strokeWidth="1.300" />
          <path d="M3.500 22.500h13.500M10 16v13" stroke="#222" strokeWidth="1.300" />
        </Ic>
      </SideItem>
      <SideItem arrow>
        <Ic>
          <path d="M6 10.500h14.500V26H6zM6 10.500l5-5h15.500l-6 5M26.500 5.500V21L20.500 26" stroke="#111" strokeWidth="2.200" strokeLinejoin="round" />
          <path d="M10 9h12" stroke="#111" />
        </Ic>
      </SideItem>
      <div className="flex h-[37.500px] shrink-0">
        <div className="flex w-[38px] items-center justify-center border-r border-b border-[#a0a0a0] shadow-[inset_1px_1px_0_#fff]">
          <Ic>
            <path d="M1 16Q8 6.500 16 6.500T31 16Q24 25.500 16 25.500T1 16z" fill="#2a2a2a" />
            <circle cx="16" cy="16" r="6" fill="#f0f0f0" />
            <circle cx="16" cy="16" r="3.500" fill="#999" />
            <circle cx="16" cy="16" r="1.500" fill="#111" />
          </Ic>
        </div>
        <div className="flex w-[15px] items-center justify-center border-r border-b border-[#a0a0a0] shadow-[inset_1px_1px_0_#fff]"><Arrow /></div>
      </div>
      <SideItem>
        <Ic><path d="M16 4l9.500 23.500q-9.500-6-19 0z" fill="#000" /></Ic>
      </SideItem>
      <div className="-ml-[2.500px] h-[5px] shrink-0" />
      <div className="-ml-[2.500px] h-[9px] shrink-0 border-t border-[#909090] pt-[3px] pl-[5px] shadow-[inset_0_1px_0_#fff]"><HGrip /></div>
      <div className="h-[5px] shrink-0" />
      <div className="flex h-[37px] w-[38px] shrink-0 items-center justify-center border border-t-[#909090] border-r-white border-b-white border-l-[#909090] bg-[#f7f7f7]">
        <Ic><rect x="3.500" y="6" width="25" height="20" fill="url(#rain)" /></Ic>
      </div>
      <div className="flex h-[37.500px] w-[38px] shrink-0 items-center justify-center border border-t-[#909090] border-r-white border-b-white border-l-[#909090] bg-[#f7f7f7]">
        <Ic>
          <rect x="7" y="5" width="4" height="23" fill="url(#rainv)" />
          <path d="M14 7h11M14 12h11M14 17h11M14 22h11M14 27h11" stroke="#222" strokeWidth="1.500" />
        </Ic>
      </div>
      <SideItem>
        <Ic>
          <path d="M15.500 4v25" stroke="#000" strokeWidth="2.600" />
          <rect x="20" y="4" width="6" height="4" rx="1" fill="#f00" />
          <rect x="5" y="25" width="6" height="4" rx="1" fill="#1010f0" />
        </Ic>
      </SideItem>
      <SideItem>
        <Ic>
          <rect x="3" y="5" width="26" height="21" rx="2" stroke="#000" strokeWidth="2.400" />
          <path d="M7 17h11M7 21h17" stroke="#000" strokeWidth="2.200" />
        </Ic>
      </SideItem>
      <SideItem>
        <Ic>
          <path d="M4 9v15" stroke="#000" strokeWidth="1.500" />
          <path d="M4 16h24" stroke="#000" strokeWidth="2" />
        </Ic>
      </SideItem>
      <SideItem>
        <Ic>
          <path d="M4 9v15" stroke="#000" strokeWidth="1.500" />
          <path d="M4 16q12-1 24 6" stroke="#000" strokeWidth="2.200" />
        </Ic>
      </SideItem>
      <SideItem>
        <Ic>
          <path d="M4 7h12M7 16v6M13 15l10 6" stroke="#000" strokeWidth="2.400" />
          <path d="M15 3l6 4-6 4zM3 21h8l-4 7zM20 24.500l4-7 5 8z" fill="#000" />
        </Ic>
      </SideItem>
      <SideItem>
        <Ic>
          <rect x="2.500" y="5" width="27" height="21.500" stroke="#000" strokeWidth="1.500" />
          <g stroke="#222" strokeWidth="1.200">
            <ellipse cx="8" cy="20" rx="3" ry="4" transform="rotate(-20 8 20)" />
            <path d="M3 14q7-3 10 4 2 5 0 8M3 10q10-1 14 8l2 8M7 6q6 2 10 7t7 13M12 6q6 4 9 8t8 10M17 6l12 13M22 6l7 8M26 6l3 3" />
          </g>
        </Ic>
      </SideItem>
    </aside>
  );
}

export default function App() {
  return (
    <div className="flex h-[1000px] w-[1920px] flex-col overflow-hidden bg-[#f0f0f0]">
      <TitleBar />
      <MenuBar />
      <ToolBars />
      <div className="flex flex-1">
        <Explorer />
        <Viewport />
        <RightBar />
      </div>
    </div>
  );
}
